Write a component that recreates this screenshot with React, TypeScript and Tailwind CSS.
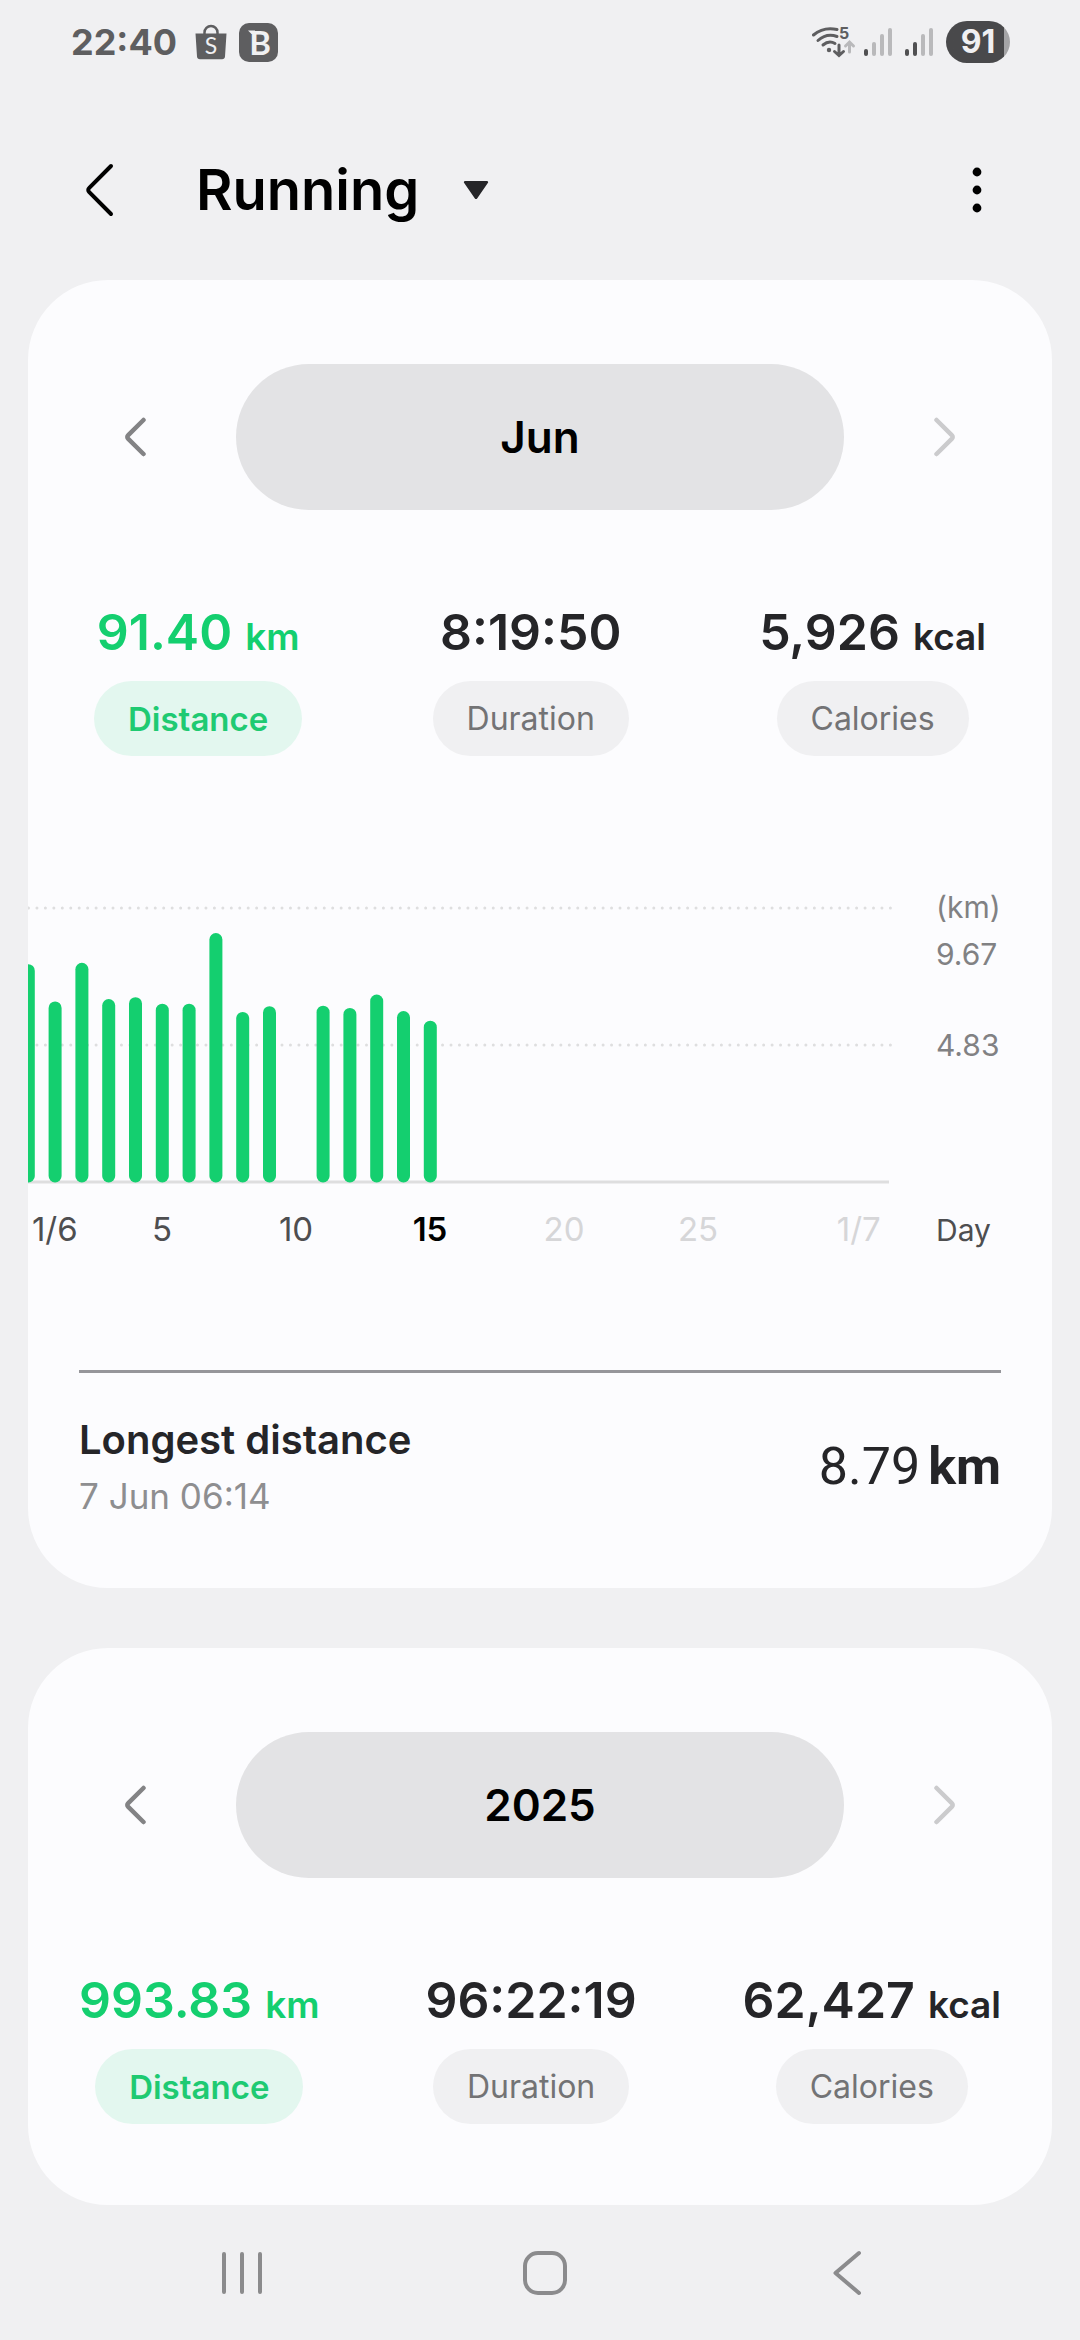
type Stat = { value: string; unit?: string; label: string; active?: boolean };

const JUNE: Stat[] = [
  { value: "91.40", unit: "km", label: "Distance", active: true },
  { value: "8:19:50", label: "Duration" },
  { value: "5,926", unit: "kcal", label: "Calories" },
];

const YEAR: Stat[] = [
  { value: "993.83", unit: "km", label: "Distance", active: true },
  { value: "96:22:19", label: "Duration" },
  { value: "62,427", unit: "kcal", label: "Calories" },
];

// Kilometres per day; the first entry is 31 May, the last is 15 June.
const DAILY_KM = [7.69, 6.38, 7.74, 6.46, 6.53, 6.3, 6.3, 8.79, 6.01, 6.21, 0, 6.23, 6.15, 6.62, 6.04, 5.7];
const MAX_KM = 9.67;

const DAY_LABELS = [
  { day: 1, text: "1/6", tone: "past" },
  { day: 5, text: "5", tone: "past" },
  { day: 10, text: "10", tone: "past" },
  { day: 15, text: "15", tone: "today" },
  { day: 20, text: "20", tone: "future" },
  { day: 25, text: "25", tone: "future" },
  { day: 31, text: "1/7", tone: "future" },
];

const TONES: Record<string, string> = {
  past: "fill-[#4e4e50]",
  today: "fill-black font-semibold",
  future: "fill-[#d6d6d8]",
};

function Signal({ level }: { level: number }) {
  return (
    <svg width="28" height="30" viewBox="0 0 28 30" aria-hidden="true" strokeWidth="4" strokeLinecap="round">
      {[24, 17, 9, 3].map((y, i) => (
        <path key={y} d={`M${2 + i * 8} ${y}V27`} stroke={i < level ? "#505052" : "#b9b9bb"} />
      ))}
    </svg>
  );
}

function StatusBar() {
  return (
    <div className="flex h-[84px] items-center justify-between pr-[70px] pl-[71px] text-[#5e5e60]">
      <div className="flex items-center">
        <span className="text-[36px] leading-[44px] font-bold">22:40</span>
        <svg className="ml-[18px]" width="32" height="36" viewBox="0 0 32 36" aria-hidden="true">
          <path d="M9.500 10V8.500a6.500 6.500 0 0 1 13 0V10" fill="none" stroke="#5e5e60" strokeWidth="2.500" />
          <path d="M.5 9.500h31l-1.500 23a3 3 0 0 1-3 2.700H5a3 3 0 0 1-3-2.700z" fill="#5e5e60" />
          <text x="16" y="30" textAnchor="middle" fontSize="23" fontFamily="Lato, sans-serif" fill="#f0f0f2">
            S
          </text>
        </svg>
        <svg className="ml-3" width="39" height="39" viewBox="0 0 39 39" aria-hidden="true">
          <rect width="39" height="39" rx="10" fill="#5e5e60" />
          <path d="M9 7.500h7v3.500h-3.500z" fill="#f0f0f2" />
          <text x="21" y="31.500" textAnchor="middle" fontSize="33" fontWeight="700" fontFamily="Lato, sans-serif" fill="#f0f0f2">
            B
          </text>
        </svg>
      </div>
      <div className="flex items-center">
        <svg width="44" height="40" viewBox="0 -4 44 40" fill="none" strokeLinecap="round" aria-hidden="true">
          <g stroke="#5e5e60" strokeWidth="3">
            <path d="M1.500 9C8 3.500 16 1.500 25 3.500" />
            <path d="M6 14.500c5.500-5 12-6.500 19-4" />
            <path d="M11 19c4-3.500 8-4 12-1.500" />
            <path d="M27 19v10M22.500 25.500l4.500 4 4.500-4" />
          </g>
          <circle cx="17" cy="24" r="2.200" fill="#5e5e60" />
          <path d="M37.500 26V17M33.500 20l4-4 4 4" stroke="#b9b9bb" strokeWidth="3" />
          <text x="27" y="13" fontSize="16" fontWeight="700" fontFamily="Inter, sans-serif" fill="#5e5e60">
            5
          </text>
        </svg>
        <span className="ml-2 flex">
          <Signal level={1} />
        </span>
        <span className="ml-[13px] flex">
          <Signal level={2} />
        </span>
        <span className="ml-[13px] flex h-[42px] w-16 items-center justify-center rounded-full bg-linear-to-r from-[#49494b] from-90% to-[#a5a5a7] to-90% text-[32px] leading-10 font-bold text-[#f0f0f2]">
          91
        </span>
      </div>
    </div>
  );
}

function Header() {
  return (
    <header className="flex h-[196px] items-center pt-4 pr-[83px] pl-[84px]">
      <button type="button" aria-label="Back" className="flex">
        <svg width="30" height="54" viewBox="0 0 30 54" fill="none" stroke="#000" strokeWidth="4" strokeLinecap="round" strokeLinejoin="round">
          <path d="M27 3L5 25.200a2.500 2.500 0 0 0 0 3.600L27 51" />
        </svg>
      </button>
      <button type="button" className="ml-[82px] flex items-center gap-11">
        <span className="text-[56px] leading-[68px] font-semibold text-black">Running</span>
        <svg width="26" height="20" viewBox="0 0 26 20" fill="#252528" aria-hidden="true">
          <path d="M2 1h22a1.200 1.200 0 0 1 .8 2L14.300 18.200a1.600 1.600 0 0 1-2.600 0L1.200 3A1.200 1.200 0 0 1 2 1z" />
        </svg>
      </button>
      <button type="button" aria-label="More options" className="ml-auto flex w-10 justify-center">
        <svg width="10" height="46" viewBox="0 0 10 46" fill="#000">
          <circle cx="5" cy="5" r="4.400" />
          <circle cx="5" cy="23" r="4.400" />
          <circle cx="5" cy="41" r="4.400" />
        </svg>
      </button>
    </header>
  );
}

function PeriodPicker({ label }: { label: string }) {
  return (
    <div className="flex items-center pr-[79px] pl-[79px]">
      <button type="button" aria-label="Previous" className="flex w-[129px] justify-start pl-[17px]">
        <svg width="22" height="40" viewBox="0 0 22 40" fill="none" stroke="#838385" strokeWidth="4.500" strokeLinecap="round" strokeLinejoin="round">
          <path d="M19.500 3L4 18.400a2.200 2.200 0 0 0 0 3.200L19.500 37" />
        </svg>
      </button>
      <button type="button" className="h-[146px] flex-1 rounded-[73px] bg-[#e3e3e5] text-[44px] leading-[54px] font-semibold text-black">
        {label}
      </button>
      <button type="button" disabled aria-label="Next" className="flex w-[129px] justify-end pr-[17px]">
        <svg width="22" height="40" viewBox="0 0 22 40" fill="none" stroke="#cbcbcd" strokeWidth="4.500" strokeLinecap="round" strokeLinejoin="round">
          <path d="M2.500 3L18 18.400a2.200 2.200 0 0 1 0 3.200L2.500 37" />
        </svg>
      </button>
    </div>
  );
}

function StatItem({ stat }: { stat: Stat }) {
  return (
    <div className="flex flex-col items-center">
      <p className={`text-[50px] leading-16 font-semibold whitespace-nowrap ${stat.active ? "text-[#14cf6f]" : "text-[#252528]"}`}>
        {stat.value}
        {stat.unit && <span className="ml-[13px] text-[37px] leading-none">{stat.unit}</span>}
      </p>
      <button
        type="button"
        aria-pressed={!!stat.active}
        className={`mt-[17px] h-[75px] rounded-full px-[34px] leading-10 ${
          stat.active ? "bg-[#e3f7ef] text-[33px] font-semibold text-[#1fca72]" : "bg-[#f0f0f2] text-[32px] text-[#737375]"
        }`}
      >
        {stat.label}
      </button>
    </div>
  );
}

function DistanceChart() {
  const step = 26.8;
  const base = 302;
  return (
    <svg className="mt-[124px] block w-full" viewBox="0 0 1024 390" role="img" aria-label="Distance per day" fontFamily="Inter, sans-serif">
      <g stroke="#dededf" strokeWidth="3">
        <path d="M.5 28H864" strokeDasharray="0 8.450" strokeLinecap="round" />
        <path d="M.5 165H864" strokeDasharray="0 8.450" strokeLinecap="round" />
        <path d="M0 302H861" />
      </g>
      {DAILY_KM.map((km, day) => {
        const h = (km / MAX_KM) * 274.5;
        return km > 0 && <rect key={day} x={day * step - 6.5 + 0.3} y={base + 0.5 - h} width="13" height={h} rx="6.500" fill="#14cf6f" />;
      })}
      <g fontSize="33" textAnchor="middle">
        {DAY_LABELS.map(({ day, text, tone }) => (
          <text key={text} x={day * step} y="361" className={TONES[tone]}>
            {text}
          </text>
        ))}
      </g>
      <g fontSize="30" fill="#818183">
        <text x="908" y="38">(km)</text>
        <text x="908" y="85">9.67</text>
        <text x="908" y="176">4.83</text>
        <text x="908" y="361" fill="#4e4e50">Day</text>
      </g>
    </svg>
  );
}

function NavBar() {
  return (
    <nav className="flex h-[135px] items-center justify-between pr-[193px] pl-[202px]" aria-label="System navigation">
      <button type="button" aria-label="Recent apps" className="flex w-20 justify-center">
        <svg width="42" height="44" viewBox="0 0 42 44" stroke="#8b8b8d" strokeWidth="4" strokeLinecap="round">
          <path d="M3 3v38M21 3v38M39 3v38" />
        </svg>
      </button>
      <button type="button" aria-label="Home" className="flex w-20 justify-center">
        <svg width="46" height="46" viewBox="0 0 46 46" fill="none" stroke="#8b8b8d" strokeWidth="4">
          <rect x="3" y="3" width="40" height="40" rx="13" />
        </svg>
      </button>
      <button type="button" aria-label="Back" className="flex w-20 justify-center">
        <svg width="30" height="46" viewBox="0 0 30 46" fill="none" stroke="#8b8b8d" strokeWidth="4" strokeLinecap="round" strokeLinejoin="round">
          <path d="M27 3L3.500 23 27 43" />
        </svg>
      </button>
    </nav>
  );
}

export default function App() {
  return (
    <div className="min-h-screen bg-[#f0f0f2] font-['Inter',sans-serif]">
      <StatusBar />
      <Header />
      <main className="flex flex-col gap-[60px] px-7">
        <section className="overflow-hidden rounded-[80px] bg-[#fcfcfe] pt-[84px] pb-[71px]" aria-label="June">
          <PeriodPicker label="Jun" />
          <div className="mt-[90px] flex justify-between px-[66px]">
            {JUNE.map((s) => (
              <StatItem key={s.label} stat={s} />
            ))}
          </div>
          <DistanceChart />
          <div className="mx-[51px] mt-[100px] flex items-center justify-between border-t-3 border-[#96969a] pt-[43px]">
            <div>
              <h2 className="text-[40px] leading-12 font-semibold text-[#252528]">Longest distance</h2>
              <p className="mt-[11px] text-[35px] leading-[42px] text-[#8e8e90]">7 Jun 06:14</p>
            </div>
            <p className="flex items-baseline gap-2 font-['Roboto',sans-serif] text-[52px] leading-16 text-[#252528]">
              <span>8.79</span>
              <span className="font-bold">km</span>
            </p>
          </div>
        </section>
        <section className="rounded-[80px] bg-[#fcfcfe] pt-[84px] pb-[81px]" aria-label="2025">
          <PeriodPicker label="2025" />
          <div className="mt-[90px] flex justify-between px-[51px]">
            {YEAR.map((s) => (
              <StatItem key={s.label} stat={s} />
            ))}
          </div>
        </section>
      </main>
      <NavBar />
    </div>
  );
}
